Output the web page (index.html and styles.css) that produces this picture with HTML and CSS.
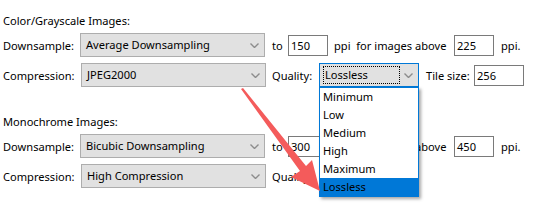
FILE: index.html
```html
<!DOCTYPE html>
<html lang="en">
  <head>
    <meta charset="UTF-8" />
    <title>Image Settings</title>
    <link rel="stylesheet" href="styles.css">
  </head>
  <body>
    <div class="panel">
      <div class="group-title">Color/Grayscale Images:</div>
      <div class="row">
        <span class="label">Downsample:</span>
        <div class="combo">Average Downsampling<svg class="chev" width="9" height="5" viewBox="0 0 9 5"><polyline points="0.5,0.5 4.5,4.5 8.5,0.5" /></svg></div>
        <span class="to">to</span>
        <div class="field">150</div>
        <span class="mid">ppi&nbsp; for images above</span>
        <div class="field">225</div>
        <span class="unit">ppi.</span>
      </div>
      <div class="row second">
        <span class="label">Compression:</span>
        <div class="combo shifted">JPEG2000<svg class="chev" width="9" height="5" viewBox="0 0 9 5"><polyline points="0.5,0.5 4.5,4.5 8.5,0.5" /></svg></div>
        <span class="quality">Quality:</span>
        <div class="combo small focused">
          <span class="focus-ring">Lossless</span><svg class="chev" width="9" height="5" viewBox="0 0 9 5"><polyline points="0.5,0.5 4.5,4.5 8.5,0.5" /></svg>
          <ul class="dropdown">
            <li>Minimum</li>
            <li>Low</li>
            <li>Medium</li>
            <li>High</li>
            <li>Maximum</li>
            <li class="selected">Lossless</li>
          </ul>
        </div>
        <span class="tile">Tile size:</span>
        <div class="field wide">256</div>
      </div>

      <div class="group-title mono">Monochrome Images:</div>
      <div class="row">
        <span class="label">Downsample:</span>
        <div class="combo">Bicubic Downsampling<svg class="chev" width="9" height="5" viewBox="0 0 9 5"><polyline points="0.5,0.5 4.5,4.5 8.5,0.5" /></svg></div>
        <span class="to">to</span>
        <div class="field">300</div>
        <span class="mid">ppi&nbsp; for images above</span>
        <div class="field">450</div>
        <span class="unit">ppi.</span>
      </div>
      <div class="row second">
        <span class="label">Compression:</span>
        <div class="combo shifted">High Compression<svg class="chev" width="9" height="5" viewBox="0 0 9 5"><polyline points="0.5,0.5 4.5,4.5 8.5,0.5" /></svg></div>
        <span class="quality">Quality:</span>
        <div class="combo small">Lossless<svg class="chev" width="9" height="5" viewBox="0 0 9 5"><polyline points="0.5,0.5 4.5,4.5 8.5,0.5" /></svg></div>
      </div>
    </div>

    <!-- annotation arrow pointing at the Lossless option -->
    <svg class="pointer" width="548" height="213" viewBox="0 0 548 213">
      <polygon points="241,89 243,88 306,166 312,160 320,191 291,177 300,171" />
    </svg>
  </body>
</html>
```

FILE: styles.css
```css
body {
  margin: 0;
  background: #fff;
  font-family: "Noto Sans", "Liberation Sans", sans-serif;
  font-size: 11.1px;
  color: #000;
  width: 548px;
  height: 213px;
  overflow: hidden;
}

.panel {
  padding: 13px 0 0 3px;
  white-space: nowrap;
}

.group-title {
  height: 16px;
  line-height: 16px;
}

.group-title.mono {
  margin-top: 27px;
}

.row {
  display: flex;
  align-items: center;
  height: 24px;
  margin-top: 4px;
}

.row.second {
  margin-top: 6px;
}

.label {
  width: 77px;
}

.combo {
  position: relative;
  box-sizing: border-box;
  width: 185px;
  height: 24px;
  border: 1px solid #adadad;
  background: #e1e1e1;
  padding-left: 5px;
  line-height: 22px;
}

.combo.shifted {
  margin-left: 1px;
}

.combo.small {
  width: 100px;
  padding-left: 3px;
}

.combo.focused {
  border-color: #0078d7;
}

.chev {
  position: absolute;
  right: 5px;
  top: 9px;
  fill: none;
  stroke: #8c8c8c;
  stroke-width: 1.4;
}

.focus-ring {
  display: inline-block;
  box-sizing: border-box;
  width: 77px;
  height: 18px;
  margin-top: 2px;
  line-height: 16px;
  padding-left: 1px;
  border: 1px dotted #000;
  vertical-align: top;
}

.to {
  width: 16px;
  margin-left: 7px;
}

.field {
  box-sizing: border-box;
  width: 40px;
  height: 21px;
  border: 1px solid #7a7a7a;
  background: #fff;
  padding-left: 2px;
  line-height: 19px;
}

.field.wide {
  width: 50px;
}

.mid {
  width: 120px;
  padding-left: 6px;
}

.unit {
  margin-left: 7px;
}

.quality {
  width: 47px;
  margin-left: 6px;
}

.tile {
  width: 48px;
  margin-left: 7px;
}

.dropdown {
  position: absolute;
  left: -1px;
  top: 23px;
  width: 100px;
  box-sizing: border-box;
  margin: 0;
  padding: 0;
  list-style: none;
  background: #fff;
  border: 1px solid #0078d7;
  box-shadow: 2px 2px 3px rgba(0, 0, 0, 0.35);
  z-index: 2;
}

.dropdown li {
  height: 18px;
  line-height: 18px;
  padding-left: 3px;
}

.dropdown li.selected {
  background: #0078d7;
}

.pointer {
  position: absolute;
  left: 0;
  top: 0;
  z-index: 3;
  pointer-events: none;
}

.pointer polygon {
  fill: #f45b5b;
}
```
